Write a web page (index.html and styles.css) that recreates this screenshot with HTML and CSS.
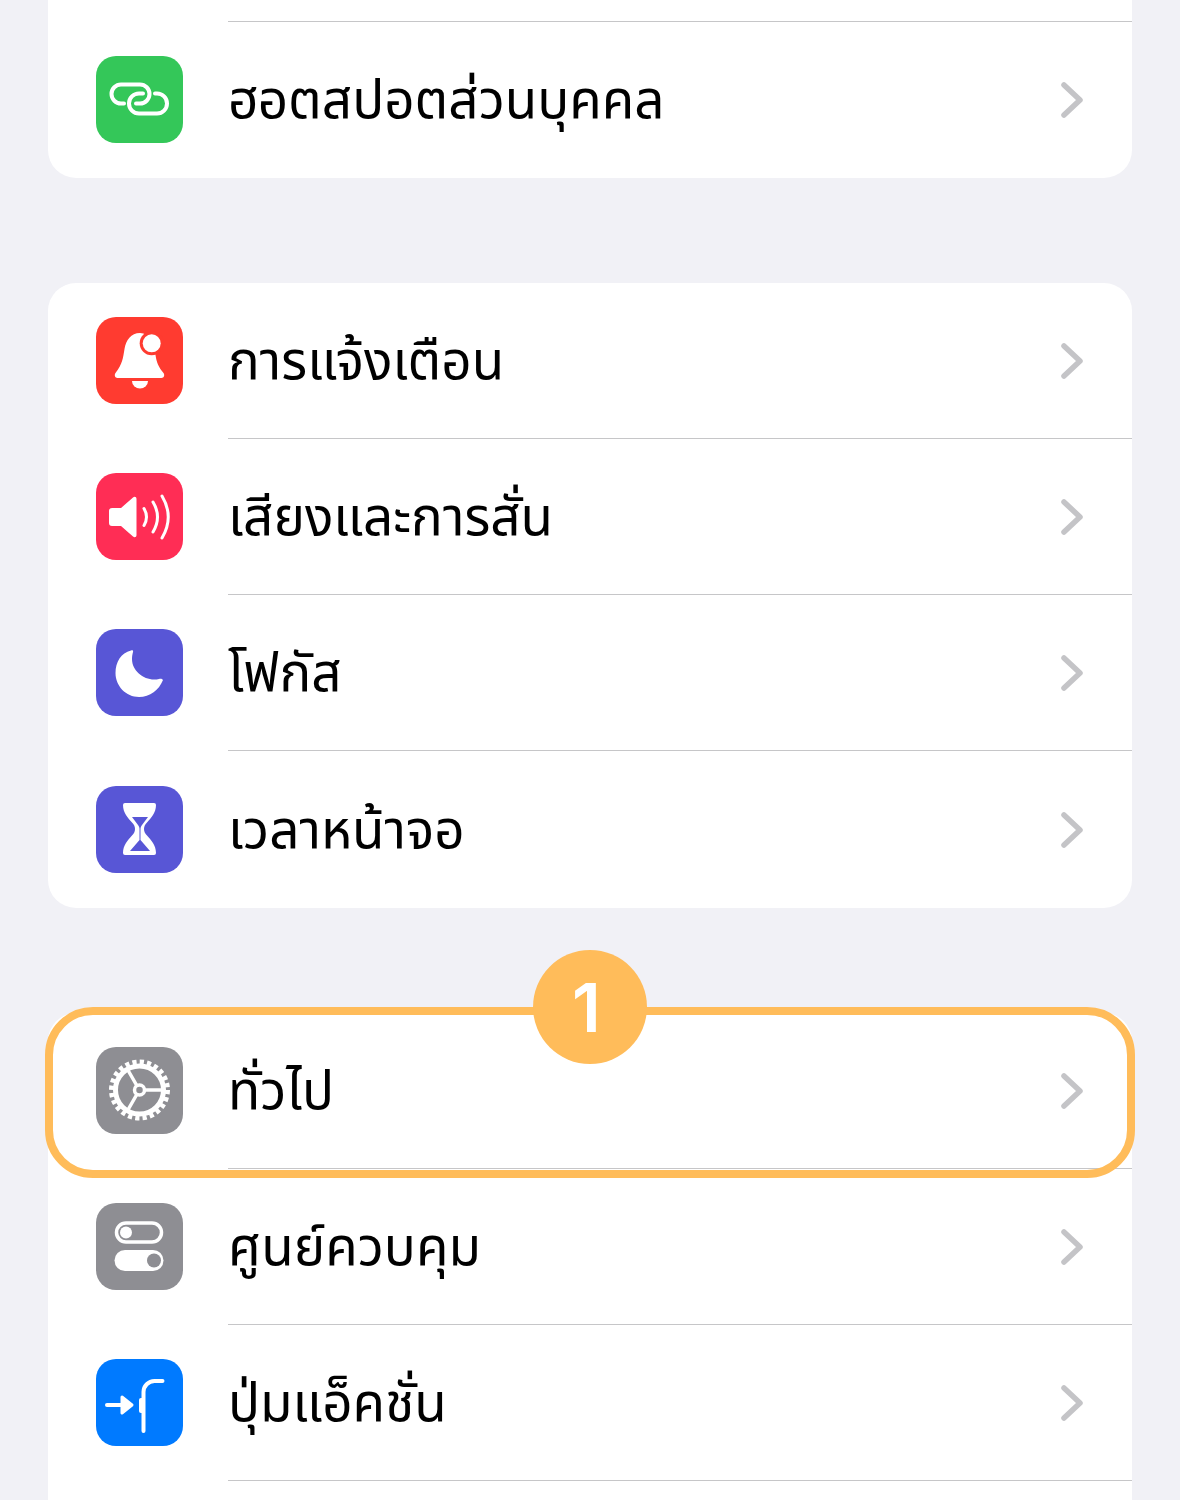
FILE: index.html
```html
<!DOCTYPE html>
<html lang="th">
<head>
  <meta charset="UTF-8" />
  <title>การตั้งค่า</title>
  <link rel="stylesheet" href="styles.css">
</head>
<body>
  <section class="card card-first">
    <div class="row-sliver"></div>
    <div class="row">
      <div class="icon green">
        <svg viewBox="0 0 87 87" fill="none" stroke="#fff" stroke-width="4" stroke-linecap="round">
          <path d="M28 47.5H25a9.5 9.5 0 0 1 0-19H44a9.5 9.5 0 0 1 0 19H40"/>
          <path d="M47 37.5H43a10 10 0 0 0 0 20H61a10 10 0 0 0 0-20H59"/>
        </svg>
      </div>
      <div class="label-wrap"><span class="label">ฮอตสปอตส่วนบุคคล</span>
        <svg class="chevron" viewBox="0 0 24 36" fill="none"><path d="M4 3L20 18L4 33"/></svg>
      </div>
    </div>
  </section>

  <section class="card">
    <div class="row">
      <div class="icon red">
        <svg viewBox="0 0 87 87">
          <path fill="#fff" d="M44 16c-9 0-14 7-15.500 16-1.500 9-2 15-9 24-1.500 2-.5 5 2 5h44c2.500 0 3.500-3 2-5-5-6-7-11-8-18-1.500-12-6-22-15.500-22z"/>
          <path fill="#fff" d="M36 64h16a8 7.500 0 0 1-16 0z"/>
          <circle cx="55.700" cy="26.300" r="12" fill="#ff3b30"/>
          <circle cx="55.700" cy="26.300" r="9" fill="#fff"/>
        </svg>
      </div>
      <div class="label-wrap"><span class="label">การแจ้งเตือน</span>
        <svg class="chevron" viewBox="0 0 24 36" fill="none"><path d="M4 3L20 18L4 33"/></svg>
      </div>
    </div>
    <div class="row">
      <div class="icon pink">
        <svg viewBox="0 0 87 87">
          <path fill="#fff" d="M16 35h9l12-10.500c1.500-1.300 3.500-.8 3.500 1.500v36c0 2.300-2 2.800-3.500 1.500L25 53h-9a3 3 0 0 1-3-3V38a3 3 0 0 1 3-3z"/>
          <g fill="none" stroke="#fff" stroke-width="3" stroke-linecap="round">
            <path d="M48 35.500q5 8.500 0 17"/>
            <path d="M57 29q9 15 0 30"/>
            <path d="M66 23q12.500 21 0 42"/>
          </g>
        </svg>
      </div>
      <div class="label-wrap"><span class="label">เสียงและการสั่น</span>
        <svg class="chevron" viewBox="0 0 24 36" fill="none"><path d="M4 3L20 18L4 33"/></svg>
      </div>
    </div>
    <div class="row">
      <div class="icon indigo">
        <svg viewBox="0 0 87 87">
          <path fill="#fff" d="M35 21.500C25 24 19.500 33 19.500 44 19.500 57 30 68 43 68c11 0 20-7 24-17-1-1.500-2.500-1.500-4-1-13 3-27-7-27-20 0-3 .5-5 1-7 .5-1.500-.5-2-2-1.500z"/>
        </svg>
      </div>
      <div class="label-wrap"><span class="label">โฟกัส</span>
        <svg class="chevron" viewBox="0 0 24 36" fill="none"><path d="M4 3L20 18L4 33"/></svg>
      </div>
    </div>
    <div class="row row-last">
      <div class="icon indigo">
        <svg viewBox="0 0 87 87">
          <path fill="#fff" d="M29 17h29a2 2 0 0 1 2 2c0 8-5 13-9 17.500-2 2-3 4-3 6.500s1 4.500 3 6.500c4 4.500 9 9.500 9 17.500a2 2 0 0 1-2 2H29a2 2 0 0 1-2-2c0-8 5-13 9-17.500 2-2 3-4 3-6.500s-1-4.500-3-6.500c-4-4.500-9-9.500-9-17.500a2 2 0 0 1 2-2z"/>
          <path fill="#5856d6" d="M36 31h16l-6 8c-1 1.500-1.500 2.500-1.500 4v11l9.500 11H34l9.500-11V43c0-1.500-.5-2.500-1.500-4z"/>
        </svg>
      </div>
      <div class="label-wrap"><span class="label">เวลาหน้าจอ</span>
        <svg class="chevron" viewBox="0 0 24 36" fill="none"><path d="M4 3L20 18L4 33"/></svg>
      </div>
    </div>
  </section>

  <section class="card card-open">
    <div class="highlight"></div>
    <div class="badge">1</div>
    <div class="row">
      <div class="icon gray">
        <svg viewBox="0 0 87 87" fill="none" stroke="#fff">
          <circle cx="43.500" cy="43" r="28" stroke-width="5" stroke-dasharray="4.200 3.130"/>
          <circle cx="43.500" cy="43" r="24" stroke-width="5"/>
          <path stroke-width="3.500" d="M49 43H68M40.500 38L31 21.500M40.500 48L31 64.500"/>
          <circle cx="43.500" cy="43" r="5" stroke-width="3.500"/>
        </svg>
      </div>
      <div class="label-wrap"><span class="label">ทั่วไป</span>
        <svg class="chevron" viewBox="0 0 24 36" fill="none"><path d="M4 3L20 18L4 33"/></svg>
      </div>
    </div>
    <div class="row">
      <div class="icon gray">
        <svg viewBox="0 0 87 87">
          <rect x="20.500" y="20" width="45" height="19" rx="9.500" fill="none" stroke="#fff" stroke-width="3.500"/>
          <circle cx="30" cy="29.500" r="6" fill="#fff"/>
          <rect x="18.500" y="47" width="49" height="21" rx="10.500" fill="#fff"/>
          <circle cx="58" cy="57.500" r="7" fill="#8e8e93"/>
        </svg>
      </div>
      <div class="label-wrap"><span class="label">ศูนย์ควบคุม</span>
        <svg class="chevron" viewBox="0 0 24 36" fill="none"><path d="M4 3L20 18L4 33"/></svg>
      </div>
    </div>
    <div class="row">
      <div class="icon blue">
        <svg viewBox="0 0 87 87">
          <g fill="none" stroke="#fff" stroke-width="4" stroke-linecap="round" stroke-linejoin="round">
            <path d="M11 46H30"/>
            <path d="M47.500 72V33a11 11 0 0 1 11-11h8"/>
          </g>
          <path fill="#fff" stroke="#fff" stroke-width="3" stroke-linejoin="round" d="M26 38L36 46L26 54z"/>
          <path fill="#fff" d="M45 39h3v15h-3a2 2 0 0 1-2-2V41a2 2 0 0 1 2-2z"/>
        </svg>
      </div>
      <div class="label-wrap"><span class="label">ปุ่มแอ็คชั่น</span>
        <svg class="chevron" viewBox="0 0 24 36" fill="none"><path d="M4 3L20 18L4 33"/></svg>
      </div>
    </div>
  </section>
</body>
</html>
```

FILE: styles.css
```css
* {
  box-sizing: border-box;
}

html, body {
  height: 1500px;
  overflow: hidden;
}

body {
  margin: 0;
  padding: 0 48px;
  background: #f1f1f6;
  font-family: "Noto Sans Thai", "Noto Sans Thai Looped", "Noto Sans", "DejaVu Sans", sans-serif;
  color: #000;
}

.card {
  position: relative;
  background: #fff;
  border-radius: 28px;
  margin-bottom: 105px;
}

.card-first {
  border-radius: 0 0 28px 28px;
}

.card-open {
  height: 487px;
  border-radius: 28px 28px 0 0;
  margin-bottom: 0;
}

.row-sliver {
  height: 22px;
  margin-left: 180px;
  border-bottom: 1px solid #c6c6c8;
}

.row {
  display: flex;
  align-items: stretch;
  height: 156px;
}

.row-last {
  height: 157px;
}

.icon {
  flex: none;
  width: 87px;
  height: 87px;
  margin: 34px 45px 0 48px;
  border-radius: 20px;
}

.row-last .icon {
  margin-top: 35px;
}

.icon svg {
  display: block;
  width: 87px;
  height: 87px;
}

.green { background: #34c759; }
.red { background: #ff3b30; }
.pink { background: #ff2d55; }
.indigo { background: #5856d6; }
.gray { background: #8e8e93; }
.blue { background: #007aff; }

.label-wrap {
  flex: 1;
  display: flex;
  align-items: center;
  justify-content: space-between;
  padding-right: 48px;
  border-bottom: 1px solid #c6c6c8;
}

.row-last .label-wrap,
.card-first .label-wrap {
  border-bottom: none;
}

.label {
  margin-top: 5px;
  font-size: 53px;
  line-height: 1;
}

.chevron {
  flex: none;
  width: 24px;
  height: 36px;
}

.chevron path {
  stroke: #c4c4c7;
  stroke-width: 5.5;
  stroke-linecap: round;
  stroke-linejoin: round;
}

.highlight {
  position: absolute;
  top: -6px;
  left: -3px;
  right: -3px;
  height: 171px;
  border: 8px solid #ffbc5a;
  border-radius: 48px;
  pointer-events: none;
}

.badge {
  position: absolute;
  top: -63px;
  left: 485px;
  width: 114px;
  height: 114px;
  padding-right: 7px;
  border-radius: 50%;
  background: #ffbc5a;
  color: #fff;
  font-family: Inter, sans-serif;
  font-size: 68px;
  font-weight: 600;
  line-height: 114px;
  text-align: center;
}
```
